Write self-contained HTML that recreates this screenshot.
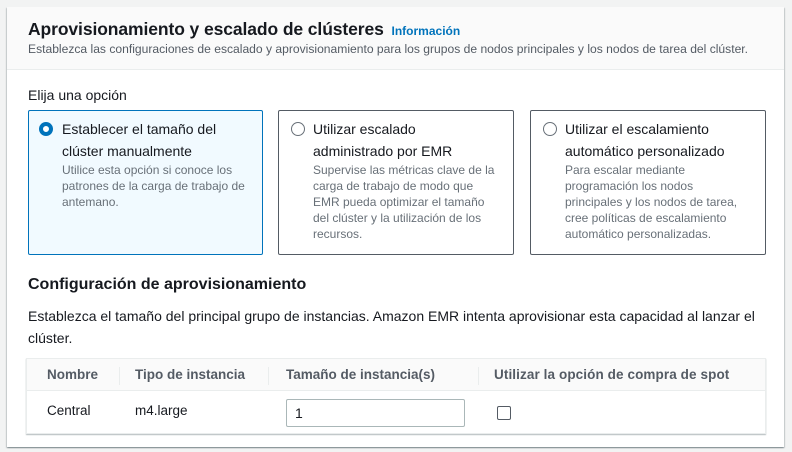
<!DOCTYPE html>
<html><head><meta charset="utf-8"><style>
*{margin:0;padding:0;box-sizing:border-box}
body{width:792px;height:452px;background:#f2f3f3;font-family:"Liberation Sans",sans-serif;color:#16191f;position:relative;overflow:hidden}
.panel{position:absolute;left:7px;top:7px;width:777px;height:440px;background:#fff;box-shadow:0 1px 1px rgba(0,28,36,.3),1px 1px 1px rgba(0,28,36,.15),-1px 1px 1px rgba(0,28,36,.15)}
.hdr{position:absolute;left:0;top:0;width:777px;height:63px;background:#fafafa;border-bottom:1px solid #eaeded}
.a{position:absolute;white-space:nowrap}
.card{position:absolute;top:110px;height:145px;border:1px solid #545b64;border-radius:2px}
.card.sel{border-color:#0073bb;background:#f1faff}
.t{font-size:14px;line-height:22px;color:#16191f}
.d{font-size:12px;line-height:16px;color:#687078}
.radio{position:absolute;width:14px;height:14px;border-radius:50%;border:1.5px solid #687078;background:#fff}
.radio.on{border:4px solid #0073bb}
.th{font-size:13.5px;font-weight:bold;color:#545b64}
</style></head><body>
<div class="panel">
<div class="hdr"></div>
<div class="a" style="left:21px;top:12px;font-size:17.5px;font-weight:bold;letter-spacing:-0.1px">Aprovisionamiento y escalado de clústeres <span style="font-size:12px;color:#0073bb;letter-spacing:0;margin-left:3px">Información</span></div>
<div class="a" style="left:21px;top:35px;font-size:12.1px;color:#545b64">Establezca las configuraciones de escalado y aprovisionamiento para los grupos de nodos principales y los nodos de tarea del clúster.</div>
<div class="a" style="left:21px;top:80px;font-size:14px">Elija una opción</div>
</div>
<div class="card sel" style="left:28px;width:235px"></div>
<div class="card" style="left:278px;width:236px"></div>
<div class="card" style="left:530px;width:236px"></div>
<div class="radio on" style="left:39px;top:122px"></div>
<div class="radio" style="left:291px;top:122px"></div>
<div class="radio" style="left:543px;top:122px"></div>
<div class="a" style="left:62px;top:118px"><div class="t">Establecer el tamaño del<br>clúster manualmente</div><div class="d">Utilice esta opción si conoce los<br>patrones de la carga de trabajo de<br>antemano.</div></div>
<div class="a" style="left:313px;top:118px"><div class="t">Utilizar escalado<br>administrado por EMR</div><div class="d">Supervise las métricas clave de la<br>carga de trabajo de modo que<br>EMR pueda optimizar el tamaño<br>del clúster y la utilización de los<br>recursos.</div></div>
<div class="a" style="left:565px;top:118px"><div class="t">Utilizar el escalamiento<br>automático personalizado</div><div class="d">Para escalar mediante<br>programación los nodos<br>principales y los nodos de tarea,<br>cree políticas de escalamiento<br>automático personalizadas.</div></div>
<div class="a" style="left:28px;top:276px;font-size:16px;font-weight:bold">Configuración de aprovisionamiento</div>
<div class="a" style="left:28px;top:305px;font-size:14px;line-height:22px;white-space:normal;width:745px">Establezca el tamaño del principal grupo de instancias. Amazon EMR intenta aprovisionar esta capacidad al lanzar el clúster.</div>
<div style="position:absolute;left:26px;top:358px;width:740px;height:76px;background:#fff;border:1px solid #eaeded;box-shadow:0 1px 1px rgba(0,28,36,.3)">
<div style="position:absolute;left:0;top:0;width:738px;height:32px;background:#fafafa;border-bottom:1px solid #eaeded"></div>
<div style="position:absolute;left:92px;top:8px;width:1px;height:18px;background:#eaeded"></div>
<div style="position:absolute;left:241px;top:8px;width:1px;height:18px;background:#eaeded"></div>
<div style="position:absolute;left:451px;top:8px;width:1px;height:18px;background:#eaeded"></div>
</div>
<div class="a th" style="left:47px;top:367px">Nombre</div>
<div class="a th" style="left:135px;top:367px">Tipo de instancia</div>
<div class="a th" style="left:286px;top:367px">Tamaño de instancia(s)</div>
<div class="a th" style="left:494px;top:367px;letter-spacing:0.1px">Utilizar la opción de compra de spot</div>
<div class="a" style="left:47px;top:403px;font-size:13.5px">Central</div>
<div class="a" style="left:135px;top:403px;font-size:13.5px">m4.large</div>
<div style="position:absolute;left:286px;top:399px;width:179px;height:28px;border:1px solid #aab7b8;border-radius:2px;font-size:14px;padding:5px 8px">1</div>
<div style="position:absolute;left:497px;top:406px;width:14px;height:14px;border:1.5px solid #545b64;border-radius:2px"></div>
</body></html>
